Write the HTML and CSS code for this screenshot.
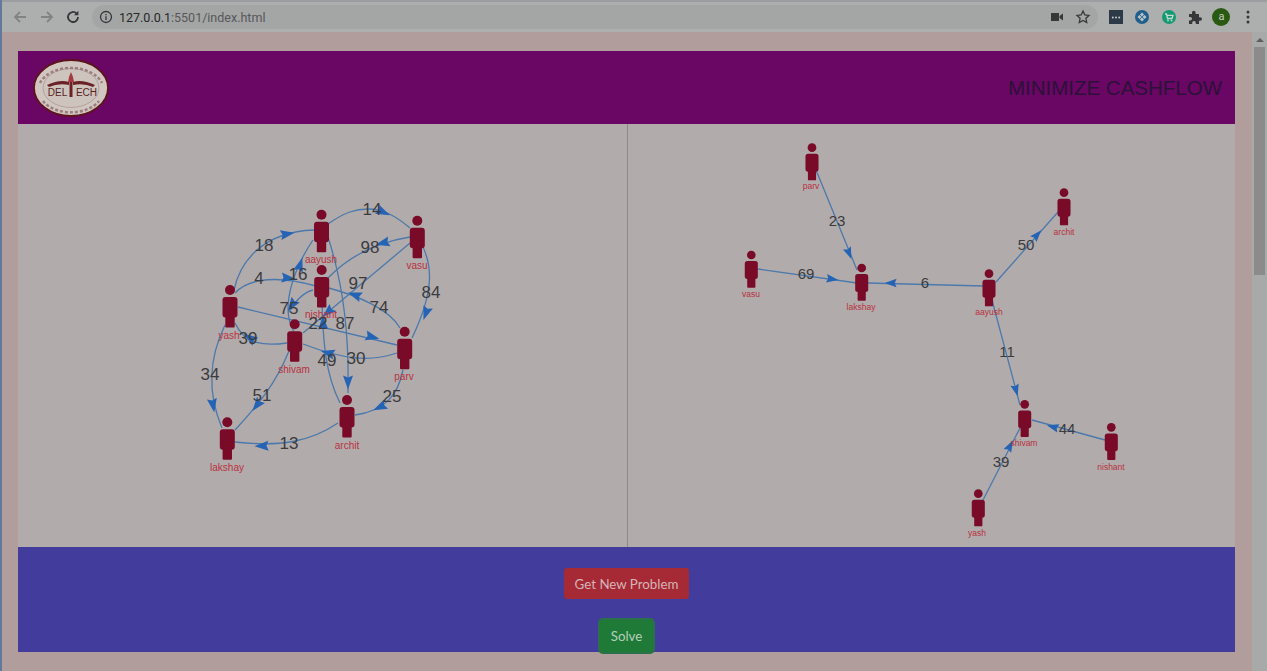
FILE: index.html
```html
<!DOCTYPE html>
<html lang="en">
<head>
    <meta charset="UTF-8">
    <title>Minimize Cashflow</title>
    <link rel="stylesheet" href="styles.css">
</head>
<body>
    <div class="toolbar">
        <div class="nav-group">
            <span class="tool-btn"><svg class="icon-faded" width="16" height="16" viewBox="0 0 16 16"><path d="M14 8H3M8 3L3 8l5 5"/></svg></span>
            <span class="tool-btn"><svg class="icon-faded" width="16" height="16" viewBox="0 0 16 16"><path d="M2 8h11M8 3l5 5-5 5"/></svg></span>
            <span class="tool-btn"><svg class="icon-line" width="16" height="16" viewBox="0 0 16 16"><path d="M13 8a5 5 0 1 1-1.5-3.6"/><path class="icon-solid" d="M13.4 1.8v4.4H9z"/></svg></span>
        </div>
        <div class="address">
            <svg class="icon-line thin" width="14" height="14" viewBox="0 0 14 14"><circle cx="7" cy="7" r="5.5"/><path d="M7 6.3v3.6M7 4v1.2"/></svg>
            <span class="url"><b>127.0.0.1</b>:5501/index.html</span>
            <svg class="addr-icon" width="16" height="16" viewBox="0 0 16 16"><path class="icon-solid" d="M2 4h8v8H2zM10.5 7l3.5-2.5v7L10.5 9z"/></svg>
            <svg class="icon-line thin" width="16" height="16" viewBox="0 0 16 16"><path d="M8 2l1.8 3.9 4.2.5-3.1 2.9.8 4.2L8 11.4l-3.7 2.1.8-4.2L2 6.4l4.2-.5z"/></svg>
        </div>
        <div class="ext-group">
            <span class="tool-btn"><svg width="14" height="14" viewBox="0 0 14 14"><rect width="14" height="14" fill="#2c3a47"/><g fill="#c4cacd"><circle cx="3.800" cy="7.500" r="1"/><circle cx="7" cy="7.500" r="1"/><circle cx="10.200" cy="7.500" r="1"/></g></svg></span>
            <span class="tool-btn"><svg width="16" height="16" viewBox="0 0 16 16"><circle cx="8" cy="8" r="7" fill="#215f8a"/><path fill="#b9c6cc" d="M8 3.5l2 2-2 2-2-2zM8 8.5l2 2-2 2-2-2zM3.5 8l2-2 2 2-2 2zM8.500 8l2-2 2 2-2 2z"/></svg></span>
            <span class="tool-btn"><svg width="16" height="16" viewBox="0 0 16 16"><circle cx="8" cy="8" r="7" fill="#139a72"/><path fill="none" stroke="#c5d8d0" stroke-width="1.3" d="M4 5h1.500l1 4.500h4.500l1-3.200H6"/><circle cx="7" cy="11.500" r=".9" fill="#c5d8d0"/><circle cx="10.500" cy="11.500" r=".9" fill="#c5d8d0"/></svg></span>
            <span class="tool-btn"><svg width="16" height="16" viewBox="0 0 16 16"><path class="icon-solid" d="M2 5h3V3.500a1.800 1.800 0 0 1 3.600 0V5h3.400v3.200h1.200a1.800 1.800 0 0 1 0 3.600H12V15H8.800v-1.200a1.800 1.800 0 0 0-3.600 0V15H2v-3.400h1.200a1.800 1.800 0 0 0 0-3.600H2z"/></svg></span>
            <span class="tool-btn"><span class="avatar">a</span></span>
            <span class="tool-btn"><svg width="16" height="16" viewBox="0 0 16 16"><g class="icon-solid"><circle cx="8" cy="3" r="1.500"/><circle cx="8" cy="8" r="1.500"/><circle cx="8" cy="13" r="1.500"/></g></svg></span>
        </div>
    </div>

    <div class="window">
        <div class="viewport">
            <header class="app-header">
                <svg class="logo" width="76" height="58" viewBox="0 0 76 58">
                    <ellipse cx="38" cy="29" rx="37" ry="28" fill="#d2c6c0" stroke="#5e141b" stroke-width="1.800"/>
                    <ellipse cx="38" cy="29" rx="28" ry="19.500" fill="#cdc4be" stroke="#a08886" stroke-width=".6"/>
                    <path class="logo-arc" d="M7 24A33 23 0 0 1 69 24"/>
                    <path class="logo-arc" d="M10 42A32 22 0 0 0 66 42"/>
                    <path class="logo-wing" d="M14 26Q27 20 36 23V26Q25 24 16 28zM62 26Q49 20 40 23V26Q51 24 60 28z"/>
                    <path class="logo-torch" d="M36 18l2-5 2 5 1 5h-6z"/>
                    <path class="logo-wing" d="M36.500 23h3v15h-3z"/>
                    <text class="logo-text" x="24.500" y="37">DEL</text>
                    <text class="logo-text" x="53.500" y="37">ECH</text>
                </svg>
                <h1>MINIMIZE CASHFLOW</h1>
            </header>

            <section class="graphs">
                <div class="graph-panel">
                    <svg class="graph" viewBox="18 124 609 423">
                        <defs>
                            <g id="person">
                                <circle cx="0" cy="0" r="5"/>
                                <rect x="-7.500" y="7" width="15" height="20.500" rx="3"/>
                                <rect x="-4.700" y="20" width="9.400" height="17.500" rx="1"/>
                            </g>
                            <polygon id="arrow" points="7.500,0 -6.500,-5 -4.500,0 -6.500,5"/>
                        </defs>

                        <g class="edges">
                            <path d="M234 290C240 262 262 232 314 230"/>
                            <path d="M328 224C345 212 356 209 368 209C385 209 398 218 410 228"/>
                            <path d="M410 237C385 241 355 250 328 278"/>
                            <path d="M410 243L303 333"/>
                            <path d="M422 245C432 265 435 290 412 338"/>
                            <path d="M400 328C390 310 360 296 325 287"/>
                            <path d="M235 293C250 277 280 276 316 286"/>
                            <path d="M313 240C298 262 278 305 294 332"/>
                            <path d="M313 290C305 292 296 300 289 312"/>
                            <path d="M340 403C326 375 323 345 322 300"/>
                            <path d="M328 237C345 290 349 340 348 393"/>
                            <path d="M238 307L397 345"/>
                            <path d="M397 353C370 362 345 360 303 344"/>
                            <path d="M287 343C265 346 245 345 235 323"/>
                            <path d="M225 325C208 360 208 395 222 428"/>
                            <path d="M289 351C275 385 258 405 235 430"/>
                            <path d="M403 370C398 395 385 411 355 415"/>
                            <path d="M338 423C310 442 280 447 235 442"/>
                        </g>
                        <g class="arrows">
                            <use href="#arrow" transform="translate(287 234) rotate(-10)"/>
                            <use href="#arrow" transform="translate(383 212) rotate(25)"/>
                            <use href="#arrow" transform="translate(383 243) rotate(166)"/>
                            <use href="#arrow" transform="translate(328 312) rotate(138)"/>
                            <use href="#arrow" transform="translate(426 313) rotate(110)"/>
                            <use href="#arrow" transform="translate(355 295) rotate(200)"/>
                            <use href="#arrow" transform="translate(288 278) rotate(5)"/>
                            <use href="#arrow" transform="translate(300 265) rotate(-72)"/>
                            <use href="#arrow" transform="translate(292 305) rotate(125)"/>
                            <use href="#arrow" transform="translate(323 323) rotate(-92)"/>
                            <use href="#arrow" transform="translate(348 382) rotate(90)"/>
                            <use href="#arrow" transform="translate(372 337) rotate(14)"/>
                            <use href="#arrow" transform="translate(328 353) rotate(195)"/>
                            <use href="#arrow" transform="translate(250 338) rotate(215)"/>
                            <use href="#arrow" transform="translate(213 405) rotate(80)"/>
                            <use href="#arrow" transform="translate(257 405) rotate(128)"/>
                            <use href="#arrow" transform="translate(380 407) rotate(155)"/>
                            <use href="#arrow" transform="translate(262 446) rotate(178)"/>
                        </g>
                        <g class="people">
                            <use href="#person" x="321.500" y="214.700"/>
                            <use href="#person" x="417.300" y="220.700"/>
                            <use href="#person" x="321.700" y="270"/>
                            <use href="#person" x="230" y="290"/>
                            <use href="#person" x="294.700" y="324.300"/>
                            <use href="#person" x="404.700" y="331.700"/>
                            <use href="#person" x="347" y="400"/>
                            <use href="#person" x="227.300" y="422.300"/>
                        </g>
                        <g class="names">
                            <text x="321" y="263">aayush</text>
                            <text x="417" y="269">vasu</text>
                            <text x="321" y="318">nishant</text>
                            <text x="229" y="339">yash</text>
                            <text x="294" y="373">shivam</text>
                            <text x="404" y="380">parv</text>
                            <text x="347" y="449">archit</text>
                            <text x="227" y="471">lakshay</text>
                        </g>
                        <g class="amounts">
                            <text x="264" y="251">18</text>
                            <text x="372" y="215">14</text>
                            <text x="370" y="253">98</text>
                            <text x="259" y="284">4</text>
                            <text x="298" y="280">16</text>
                            <text x="358" y="289">97</text>
                            <text x="431" y="298">84</text>
                            <text x="379" y="313">74</text>
                            <text x="289" y="314">75</text>
                            <text x="318" y="329">22</text>
                            <text x="345" y="329">87</text>
                            <text x="248" y="344">39</text>
                            <text x="327" y="366">49</text>
                            <text x="356" y="364">30</text>
                            <text x="210" y="380">34</text>
                            <text x="262" y="401">51</text>
                            <text x="392" y="402">25</text>
                            <text x="289" y="449">13</text>
                        </g>
                    </svg>
                </div>
                <div class="graph-panel">
                    <svg class="graph graph-small" viewBox="628 124 607 423">
                        <g class="edges">
                            <path d="M816 170L857 270"/>
                            <path d="M758 269L857 283"/>
                            <path d="M983 286L868 283"/>
                            <path d="M996 282L1058 212"/>
                            <path d="M992 300L1020 405"/>
                            <path d="M983 500L1020 428"/>
                            <path d="M1105 440L1032 420"/>
                        </g>
                        <g class="arrows">
                            <use href="#arrow" transform="translate(849 253) rotate(68) scale(.85)"/>
                            <use href="#arrow" transform="translate(832 279) rotate(8) scale(.85)"/>
                            <use href="#arrow" transform="translate(891 283) rotate(181) scale(.85)"/>
                            <use href="#arrow" transform="translate(1037 235) rotate(-48) scale(.85)"/>
                            <use href="#arrow" transform="translate(1016 390) rotate(75) scale(.85)"/>
                            <use href="#arrow" transform="translate(1010 446) rotate(-62) scale(.85)"/>
                            <use href="#arrow" transform="translate(1053 427) rotate(195) scale(.85)"/>
                        </g>
                        <g class="people">
                            <use href="#person" transform="translate(812 147.700) scale(.87)"/>
                            <use href="#person" transform="translate(1064 192.700) scale(.87)"/>
                            <use href="#person" transform="translate(751.300 255) scale(.87)"/>
                            <use href="#person" transform="translate(861.700 268) scale(.87)"/>
                            <use href="#person" transform="translate(989 273.700) scale(.87)"/>
                            <use href="#person" transform="translate(1024.700 404.300) scale(.87)"/>
                            <use href="#person" transform="translate(1111.300 427.300) scale(.87)"/>
                            <use href="#person" transform="translate(978.300 493.700) scale(.87)"/>
                        </g>
                        <g class="names">
                            <text x="811" y="189">parv</text>
                            <text x="1064" y="235">archit</text>
                            <text x="751" y="297">vasu</text>
                            <text x="861" y="310">lakshay</text>
                            <text x="989" y="315">aayush</text>
                            <text x="1024" y="446">shivam</text>
                            <text x="1111" y="470">nishant</text>
                            <text x="977" y="536">yash</text>
                        </g>
                        <g class="amounts">
                            <text x="837" y="226">23</text>
                            <text x="806" y="279">69</text>
                            <text x="925" y="288">6</text>
                            <text x="1026" y="250">50</text>
                            <text x="1007" y="357">11</text>
                            <text x="1001" y="467">39</text>
                            <text x="1067" y="434">44</text>
                        </g>
                    </svg>
                </div>
            </section>

            <footer class="controls">
                <button class="btn btn-red">Get New Problem</button>
                <button class="btn btn-green">Solve</button>
            </footer>
        </div>

        <div class="scrollbar">
            <span class="scroll-up"></span>
            <span class="scroll-thumb"></span>
        </div>
    </div>
</body>
</html>
```

FILE: styles.css
```css
html, body {
    height: 100%;
}

body {
    margin: 0;
    display: flex;
    flex-direction: column;
    overflow: hidden;
    background: #b09d9c;
    border-left: 2px solid #5f7a9a;
    box-sizing: border-box;
    font-family: "Liberation Sans", Arial, sans-serif;
}

/* browser bar */
.toolbar {
    height: 30px;
    flex: none;
    display: flex;
    align-items: center;
    padding: 0 6px 0 5px;
    background: #adafaf;
    border-top: 2px solid #9b9da0;
}

.nav-group {
    display: flex;
    width: 85px;
}

.tool-btn {
    width: 26.4px;
    height: 24px;
    flex: none;
    display: flex;
    align-items: center;
    justify-content: center;
}

.icon-faded,
.icon-line {
    fill: none;
    stroke-width: 1.8;
}

.icon-faded { stroke: #828484; }
.icon-line { stroke: #353738; }
.icon-line.thin { stroke-width: 1.3; }
.icon-solid { fill: #353738; stroke: none; }

.address {
    flex: 1;
    height: 24px;
    margin-right: 5px;
    padding: 0 7px;
    display: flex;
    align-items: center;
    gap: 6px;
    border-radius: 12px;
    background: #a4a6a6;
}

.url {
    flex: 1;
    font-family: Roboto, "Liberation Sans", sans-serif;
    font-size: 12.5px;
    color: #565859;
}

.url b {
    font-weight: 400;
    color: #26282a;
}

.addr-icon {
    margin-right: 4px;
}

.ext-group {
    display: flex;
}

.avatar {
    width: 18px;
    height: 18px;
    border-radius: 50%;
    background: #2a5a12;
    color: #c6d0c0;
    font-family: Roboto, sans-serif;
    font-size: 11px;
    line-height: 18px;
    text-align: center;
}

/* page */
.window {
    flex: 1;
    min-height: 0;
    display: flex;
}

.viewport {
    flex: 1;
    padding: 19px 17px 0 16px;
}

.scrollbar {
    width: 15px;
    flex: none;
    display: flex;
    flex-direction: column;
    align-items: center;
    background: #a8a9a9;
}

.scroll-up {
    width: 0;
    height: 0;
    margin: 6px 0 5px;
    border: 4px solid transparent;
    border-top: 0;
    border-bottom: 4px solid #5d5e5e;
}

.scroll-thumb {
    width: 11px;
    height: 228px;
    background: #8b8b8b;
}

.app-header {
    height: 73px;
    display: flex;
    align-items: center;
    justify-content: space-between;
    padding: 0 13px 0 15px;
    background: #6a0664;
}

.app-header h1 {
    margin: 0;
    font-size: 20.500px;
    font-weight: 400;
    color: #2b1238;
}

.logo-arc {
    fill: none;
    stroke: #9a7f7e;
    stroke-width: 2.500;
    stroke-dasharray: 3 2;
}

.logo-wing { fill: #6b2226; }
.logo-torch { fill: #a33a40; }

.logo-text {
    font-family: "Liberation Sans", sans-serif;
    font-size: 10px;
    text-anchor: middle;
    fill: #5a1f22;
}

.graphs {
    height: 423px;
    display: grid;
    grid-template-columns: 610px 1fr;
    background: #b1abab;
}

.graph-panel {
    min-width: 0;
}

.graph-panel:first-child {
    border-right: 1px solid #8a8a8a;
    box-sizing: border-box;
}

.graph {
    display: block;
    width: 100%;
    height: 100%;
}

.edges path {
    fill: none;
    stroke: #4c79ac;
    stroke-width: 1.3;
}

.arrows { fill: #2563b4; }
.people { fill: #790b28; }

.names text {
    font-size: 10px;
    text-anchor: middle;
    fill: #b9323f;
}

.amounts text {
    font-size: 17px;
    text-anchor: middle;
    fill: #3b3b3e;
}

.graph-small .names text { font-size: 8.500px; }
.graph-small .amounts text { font-size: 15px; }

.controls {
    height: 105px;
    display: flex;
    flex-direction: column;
    align-items: center;
    padding-top: 21px;
    gap: 21px;
    box-sizing: border-box;
    background: #423c9c;
}

.btn {
    height: 31px;
    padding: 0 10.500px;
    flex: none;
    border: 0;
    border-radius: 3px;
    font-family: Lato, "Noto Sans", sans-serif;
    font-size: 13.300px;
}

.btn-red {
    background: #a52a35;
    color: #d6b4b6;
}

.btn-green {
    height: 32px;
    background: #1f7a38;
    color: #b5d0b9;
    box-shadow: 0 0 0 2px #2a7048;
}
```
